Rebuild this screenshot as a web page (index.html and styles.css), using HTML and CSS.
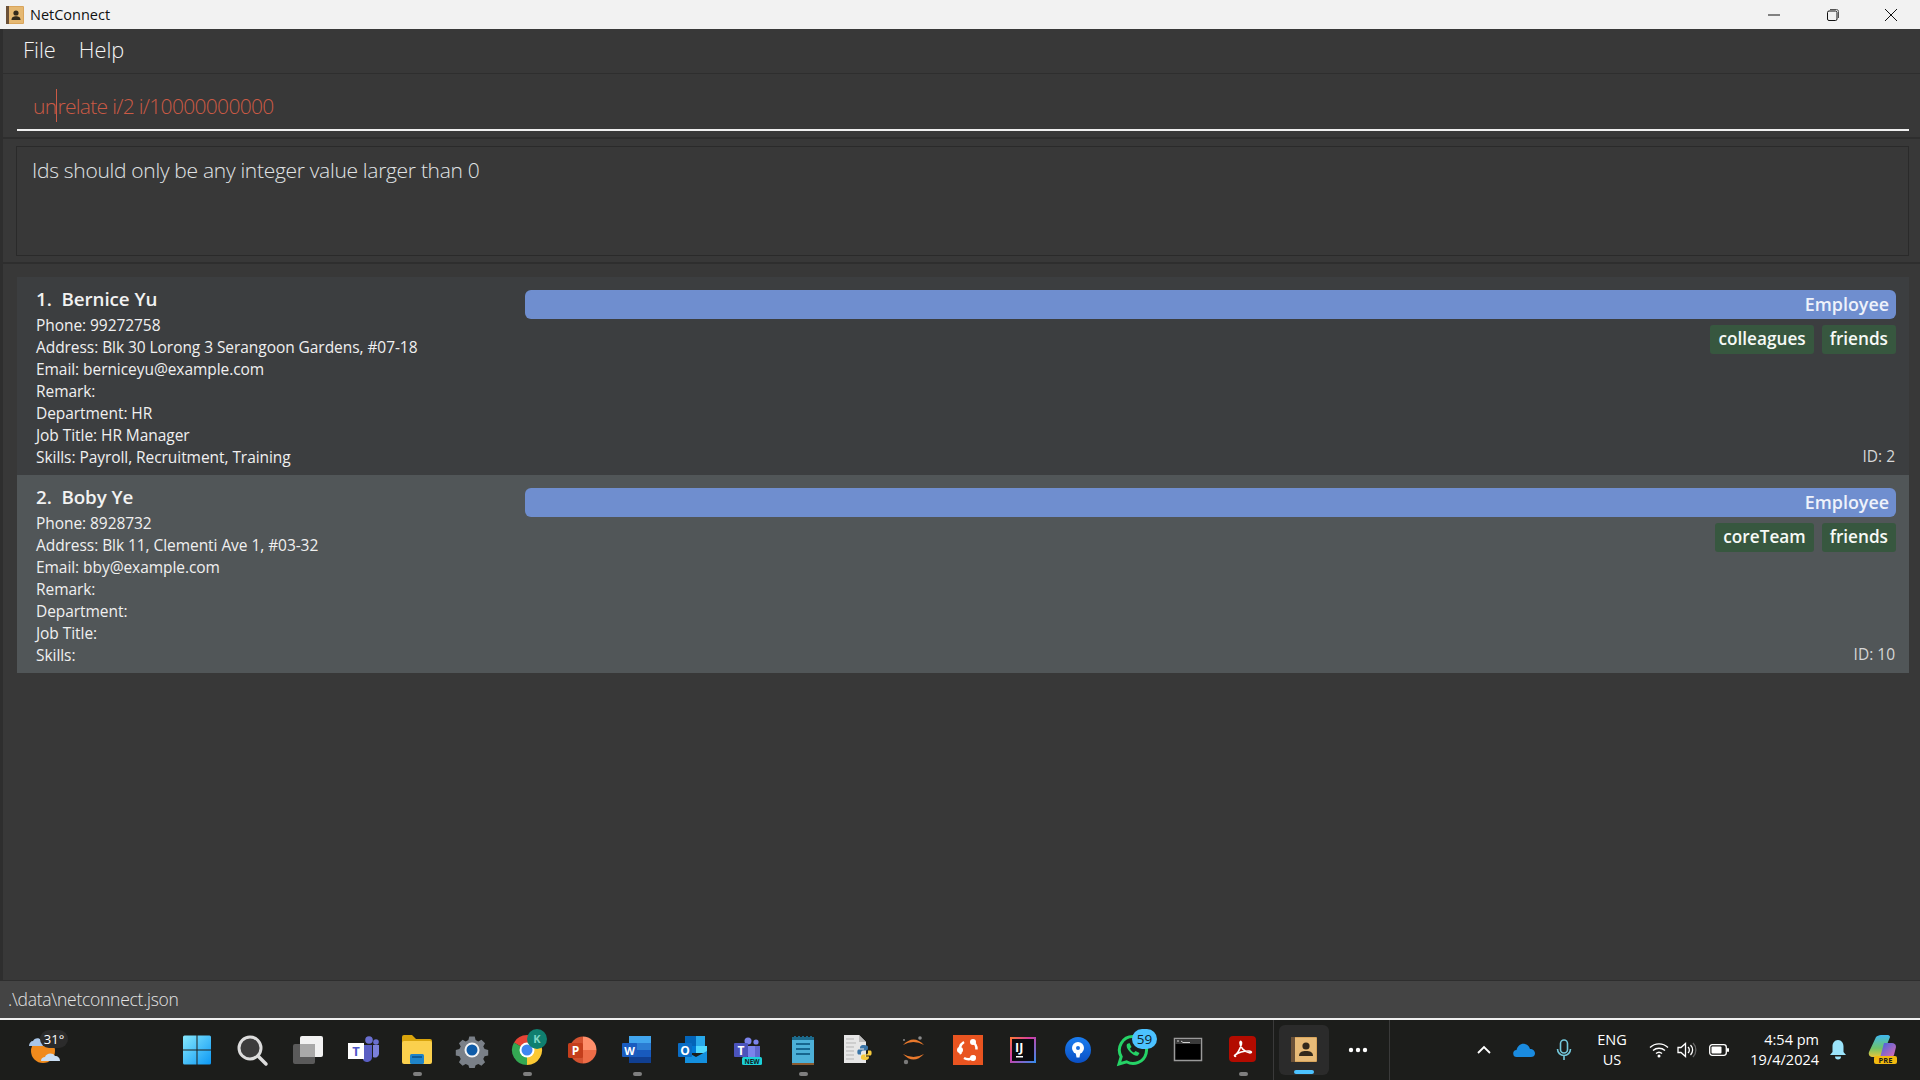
FILE: index.html
```html
<!DOCTYPE html>
<html lang="en">
<head>
<meta charset="utf-8">
<title>NetConnect</title>
<link rel="stylesheet" href="styles.css">
</head>
<body>
<div class="window">
  <header class="titlebar">
    <div class="title-left">
      <svg class="app-icon" width="18" height="18" viewBox="0 0 18 18"><rect width="18" height="18" rx="1" fill="#d9a55c"/><rect width="3" height="18" fill="#6b5138"/><rect x="3" y="1" width="14" height="16" fill="#e5b872"/><circle cx="10" cy="7" r="2.6" fill="#33291c"/><path d="M5.500 14c0-3 2-3.800 4.500-3.800s4.500.8 4.500 3.800z" fill="#33291c"/></svg>
      <span class="title-text">NetConnect</span>
    </div>
    <div class="controls">
      <span class="ctl"><svg width="14" height="14" viewBox="0 0 14 14"><path d="M1 7h12" stroke="#111" stroke-width="1" fill="none"/></svg></span>
      <span class="ctl"><svg width="14" height="14" viewBox="0 0 14 14"><rect x="1.500" y="3" width="9.500" height="9.500" rx="1.500" stroke="#111" fill="none"/><path d="M4 1.500h6.500a2 2 0 0 1 2 2V10" stroke="#555" fill="none"/></svg></span>
      <span class="ctl"><svg width="14" height="14" viewBox="0 0 14 14"><path d="M1 1l12 12M13 1L1 13" stroke="#111" stroke-width="1" fill="none"/></svg></span>
    </div>
  </header>

  <main class="app">
    <nav class="menubar"><span class="menu-item">File</span><span class="menu-item">Help</span></nav>

    <section class="cmd-pane">
      <div class="cmd-input">un<span class="caret"></span>relate i/2 i/10000000000</div>
    </section>

    <section class="result-pane">
      <div class="result-box">Ids should only be any integer value larger than 0</div>
    </section>

    <section class="list-pane">
      <article class="card">
        <div class="card-info">
          <h2 class="name">1.&nbsp; Bernice Yu</h2>
          <p>Phone: 99272758</p>
          <p>Address: Blk 30 Lorong 3 Serangoon Gardens, #07-18</p>
          <p>Email: berniceyu@example.com</p>
          <p>Remark:</p>
          <p>Department: HR</p>
          <p>Job Title: HR Manager</p>
          <p>Skills: Payroll, Recruitment, Training</p>
        </div>
        <div class="card-side">
          <div class="role">Employee</div>
          <div class="tags"><span class="tag">colleagues</span><span class="tag">friends</span></div>
          <div class="card-id">ID: 2</div>
        </div>
      </article>
      <article class="card card-alt">
        <div class="card-info">
          <h2 class="name">2.&nbsp; Boby Ye</h2>
          <p>Phone: 8928732</p>
          <p>Address: Blk 11, Clementi Ave 1, #03-32</p>
          <p>Email: bby@example.com</p>
          <p>Remark:</p>
          <p>Department:</p>
          <p>Job Title:</p>
          <p>Skills:</p>
        </div>
        <div class="card-side">
          <div class="role">Employee</div>
          <div class="tags"><span class="tag">coreTeam</span><span class="tag">friends</span></div>
          <div class="card-id">ID: 10</div>
        </div>
      </article>
    </section>

    <footer class="status">.\data\netconnect.json</footer>
  </main>

  <div class="taskbar">
    <div class="weather">
      <svg width="44" height="40" viewBox="0 0 44 40"><circle cx="18" cy="21" r="12" fill="#f08a1c"/><path d="M4 16c0-3 2-5 4-5 1-3 6-4 8-1 3 0 4 3 4 6z" fill="#a9c6e8"/><path d="M16 31c0-3 2-4 4-4 1-4 8-5 10-1 3 0 5 2 5 5z" fill="#c9ddf2"/><rect x="15" y="0" width="28" height="18" rx="9" fill="#2b2b2b"/><text x="29" y="14" text-anchor="middle" class="svg-t" font-size="13" fill="#fff">31°</text></svg>
    </div>
    <div class="apps">
      <div class="slot"><svg width="40" height="40" viewBox="0 0 40 40"><defs><linearGradient id="w" x1="0" y1="0" x2="1" y2="1"><stop offset="0" stop-color="#86e8fd"/><stop offset="1" stop-color="#0c98f5"/></linearGradient></defs><path d="M6 7a1.500 1.500 0 0 1 1.500-1.500H19.500V19.500H6zM20.500 5.500H32.500A1.500 1.500 0 0 1 34 7V19.500H20.500zM6 20.500H19.500V34.500H7.500A1.500 1.500 0 0 1 6 33zM20.500 20.500H34V33a1.500 1.500 0 0 1-1.500 1.500H20.500z" fill="url(#w)"/></svg></div>
      <div class="slot"><svg width="40" height="40" viewBox="0 0 40 40"><circle cx="18" cy="18" r="11" fill="#3c3c3c" stroke="#dcdcdc" stroke-width="3"/><path d="M26 26l8 8" stroke="#dcdcdc" stroke-width="3.500" stroke-linecap="round"/></svg></div>
      <div class="slot"><svg width="40" height="40" viewBox="0 0 40 40"><rect x="6" y="14" width="22" height="20" rx="2" fill="#5a5a5a"/><rect x="13" y="6" width="23" height="21" rx="2" fill="#f2f2f2"/><rect x="13" y="14" width="15" height="13" fill="#a9a9a9"/></svg></div>
      <div class="slot"><svg width="40" height="40" viewBox="0 0 40 40"><circle cx="27" cy="10" r="3.800" fill="#6a6fd0"/><circle cx="34" cy="12" r="2.800" fill="#6a6fd0"/><path d="M21 15h9v12a5 5 0 0 1-9 3z" fill="#5a5fc4"/><path d="M31 15h6v9a4 4 0 0 1-6 3z" fill="#7b80da"/><rect x="6" y="13" width="16" height="16" fill="#fff"/><text x="14" y="26" text-anchor="middle" class="svg-b" font-size="13" fill="#5059c9">T</text></svg></div>
      <div class="slot running"><svg width="40" height="40" viewBox="0 0 40 40"><path d="M5 7a2 2 0 0 1 2-2h8l4 4h14a2 2 0 0 1 2 2v6H5z" fill="#d9a40c"/><rect x="5" y="11" width="30" height="23" rx="2" fill="#fbd04d"/><rect x="13" y="24" width="14" height="10" rx="1.500" fill="#1f84c9"/><rect x="15" y="26" width="10" height="2" fill="#0f5c97"/></svg></div>
      <div class="slot"><svg width="40" height="40" viewBox="0 0 40 40"><path d="M17 5h6l1 4 3 1.500 3.500-2 4 4-2 3.500 1.500 3 4 1v6l-4 1-1.500 3 2 3.500-4 4-3.500-2-3 1.500-1 3h-6l-1-3-3-1.500-3.500 2-4-4 2-3.500-1.500-3-4-1v-6l4-1 1.500-3-2-3.500 4-4 3.500 2 3-1.500z" fill="#7a8088" transform="translate(2 2) scale(.9)"/><circle cx="20" cy="20" r="7.500" fill="#f4f4f4"/><circle cx="20" cy="20" r="5.500" fill="#0f5ca8"/></svg></div>
      <div class="slot running"><svg width="40" height="40" viewBox="0 0 40 40"><path d="M20 20L7 12.500A15 15 0 0 1 33 12.500z" fill="#e54335"/><path d="M20 20L33 12.500A15 15 0 0 1 20 35z" fill="#fcc934"/><path d="M20 20L20 35A15 15 0 0 1 7 12.500z" fill="#34a853"/><circle cx="20" cy="20" r="7.500" fill="#fff"/><circle cx="20" cy="20" r="5.500" fill="#3f86f0"/><circle cx="30" cy="9" r="10" fill="#0f7f6f"/><text x="30" y="13" text-anchor="middle" class="svg-b" font-size="11" fill="#7fd6c5">K</text></svg></div>
      <div class="slot"><svg width="40" height="40" viewBox="0 0 40 40"><path d="M21 20V6.500A13.500 13.500 0 0 1 34.500 20z" fill="#ff8f6b"/><path d="M21 20H34.500A13.500 13.500 0 0 1 21 33.500z" fill="#ed6c47" /><path d="M21 6.500A13.500 13.500 0 0 0 21 33.500z" fill="#d35230"/><rect x="6" y="13" width="15" height="15" rx="1.500" fill="#c43e1c"/><text x="13.500" y="25" text-anchor="middle" class="svg-b" font-size="12" fill="#fff">P</text></svg></div>
      <div class="slot running"><svg width="40" height="40" viewBox="0 0 40 40"><rect x="12" y="6" width="22" height="7" fill="#41a5ee"/><rect x="12" y="13" width="22" height="7" fill="#2b7cd3"/><rect x="12" y="20" width="22" height="7" fill="#185abd"/><rect x="12" y="27" width="22" height="6" fill="#103f91"/><rect x="5" y="13" width="15" height="14" rx="1" fill="#1a5cbf"/><text x="12.500" y="24.500" text-anchor="middle" class="svg-b" font-size="11" fill="#fff">W</text></svg></div>
      <div class="slot"><svg width="40" height="40" viewBox="0 0 40 40"><rect x="13" y="6" width="20" height="10" fill="#0364b8"/><rect x="24" y="6" width="9" height="10" fill="#28a8ea"/><rect x="24" y="16" width="11" height="7" fill="#50d9ff"/><rect x="13" y="16" width="11" height="7" fill="#0078d4"/><path d="M13 21l11 6 11-6v12H13z" fill="#1490df"/><rect x="6" y="13" width="14" height="14" rx="1" fill="#0a6cc4"/><text x="13" y="24.500" text-anchor="middle" class="svg-b" font-size="12" fill="#fff">O</text></svg></div>
      <div class="slot"><svg width="40" height="40" viewBox="0 0 40 40"><circle cx="21" cy="11" r="3.500" fill="#7b83eb"/><circle cx="29" cy="12" r="2.600" fill="#7b83eb"/><rect x="21" y="16" width="7" height="12" fill="#7b83eb"/><rect x="28" y="16" width="5" height="12" fill="#5f66cf"/><rect x="7" y="13" width="14" height="14" rx="1" fill="#4b53bc"/><text x="14" y="24.500" text-anchor="middle" class="svg-b" font-size="12" fill="#fff">T</text><rect x="15" y="27" width="20" height="8" rx="1.500" fill="#1bd0d8"/><text x="25" y="33.500" text-anchor="middle" class="svg-b" font-size="6.500" fill="#10201f">NEW</text></svg></div>
      <div class="slot running"><svg width="40" height="40" viewBox="0 0 40 40"><rect x="9" y="7" width="22" height="26" fill="#4cb0d8"/><rect x="9" y="7" width="22" height="3" fill="#1c6a8c"/><path d="M12 6v3M16 6v3M20 6v3M24 6v3M28 6v3" stroke="#1c6a8c" stroke-width="2"/><rect x="9" y="33" width="22" height="2" fill="#8a5a30"/><path d="M13 14h14M13 19h14M13 24h14" stroke="#16658e" stroke-width="2"/></svg></div>
      <div class="slot"><svg width="40" height="40" viewBox="0 0 40 40"><path d="M6 5h15l7 7v21H6z" fill="#e6e6e6"/><path d="M21 5v7h7z" fill="#bdbdbd"/><path d="M8 9h8M8 13h10M8 17h8M8 21h8M8 25h8M8 29h8" stroke="#b5b5b5"/><path d="M26 15c-4 0-4 2-4 3.500h4v1h-5.500c-1.500 0-1.500 5 0 5H23v-2c0-1 1-2 2-2h3c1 0 2-1 2-2v-1.500c0-1-1-2-4-2z" fill="#3a75a8"/><path d="M27 30c4 0 4-2 4-3.500h-4v-1h5.500c1.500 0 1.500-5 0-5H30v2c0 1-1 2-2 2h-3c-1 0-2 1-2 2V28c0 1 1 2 4 2z" fill="#f5c93c"/></svg></div>
      <div class="slot"><svg width="40" height="40" viewBox="0 0 40 40"><path d="M10 15Q20.500 4 31 15Q20.500 9 10 15z" fill="#e9792c"/><path d="M10 24Q20.500 35 31 24Q20.500 30 10 24z" fill="#e9792c"/><circle cx="27" cy="8" r="1.800" fill="#8a8a8a"/><circle cx="13" cy="32" r="2.200" fill="#7a7a7a"/><circle cx="11" cy="10" r="1" fill="#8a8a8a"/></svg></div>
      <div class="slot"><svg width="40" height="40" viewBox="0 0 40 40"><rect x="5" y="5" width="30" height="30" fill="#e95420"/><path d="M13 24a8.500 8.500 0 0 1 3-12M24 11.500a8.500 8.500 0 0 1 4.500 8M27 26a8.500 8.500 0 0 1-11 2" stroke="#fff" stroke-width="2.500" fill="none"/><circle cx="12" cy="20" r="3" fill="#fff"/><circle cx="25" cy="12" r="3" fill="#fff"/><circle cx="25" cy="28" r="3" fill="#fff"/></svg></div>
      <div class="slot"><svg width="40" height="40" viewBox="0 0 40 40"><defs><linearGradient id="ij" x1="0" y1="0" x2="1" y2="1"><stop offset="0" stop-color="#ff7a2f"/><stop offset=".4" stop-color="#d43ca4"/><stop offset="1" stop-color="#2f8ff0"/></linearGradient></defs><rect x="7" y="7" width="26" height="26" fill="url(#ij)"/><rect x="9" y="9" width="22" height="22" fill="#0b0b10"/><text x="12" y="22" class="svg-b" font-size="12.500" fill="#fff">IJ</text><rect x="13" y="26" width="7" height="1.500" fill="#fff"/></svg></div>
      <div class="slot"><svg width="40" height="40" viewBox="0 0 40 40"><defs><linearGradient id="st" x1="0" y1="0" x2="0" y2="1"><stop offset="0" stop-color="#1a7df0"/><stop offset="1" stop-color="#0a4fc4"/></linearGradient></defs><circle cx="20" cy="20" r="13" fill="url(#st)"/><circle cx="20" cy="18" r="6" fill="#fff"/><path d="M17.500 22h5l-1 5.500h-3z" fill="#fff"/><circle cx="20" cy="18" r="2" fill="#1a6fe0"/></svg></div>
      <div class="slot"><svg class="over" width="40" height="40" viewBox="0 0 40 40"><path d="M20 6.500a13.500 13.500 0 1 1-6.500 25.300L6 34l2.200-7.300A13.500 13.500 0 0 1 20 6.500z" fill="none" stroke="#25d366" stroke-width="3"/><path d="M14 14c-1 2 0 5 3 8s6 4.500 8 3.500l1.500-2.500-4-2-1.500 1.500c-1.500-.5-3.500-2.500-4-4l1.500-1.500-2-4z" fill="#25d366"/><rect x="19" y="-1" width="25" height="20" rx="10" fill="#4cc2ff"/><text x="31.500" y="14" text-anchor="middle" class="svg-t" font-size="13.500" fill="#10222c">59</text></svg></div>
      <div class="slot"><svg width="40" height="40" viewBox="0 0 40 40"><rect x="6.500" y="8.500" width="27" height="22" fill="#000" stroke="#9a9a9a" stroke-width="1.500"/><rect x="7" y="9" width="26" height="5" fill="#3a3a3a"/><path d="M9 11h2M13 11l2 1.500h7" stroke="#cfcfcf" stroke-width="1" fill="none"/></svg></div>
      <div class="slot running"><svg width="40" height="40" viewBox="0 0 40 40"><rect x="6" y="6" width="27" height="26" rx="4" fill="#b30b00"/><path d="M11 26c3-1.500 6-7 7.500-12 .5-3-1.500-3.500-1.500-1 0 4 4 9 10 10 2 0 2-2-1-2-4 0-10 1-14 4-1 1 0 2 1 1" fill="none" stroke="#fff" stroke-width="1.600"/></svg></div>
    </div>
    <div class="sep sep-a"></div>
    <div class="active">
      <svg width="26" height="26" viewBox="0 0 26 26"><rect width="26" height="25" rx="1" fill="#d9a55c"/><rect width="4" height="25" fill="#6b5138"/><rect x="4" y="1" width="21" height="23" fill="#e8bb78"/><circle cx="15" cy="9" r="3.600" fill="#33291c"/><path d="M8 19c0-4 3-5 7-5s7 1 7 5z" fill="#33291c"/></svg>
    </div>
    <div class="more"><svg width="20" height="6" viewBox="0 0 20 6"><circle cx="3" cy="3" r="2.200" fill="#fff"/><circle cx="10" cy="3" r="2.200" fill="#fff"/><circle cx="17" cy="3" r="2.200" fill="#fff"/></svg></div>
    <div class="sep sep-b"></div>
    <div class="tray">
      <div class="t-slot w40"><svg width="16" height="10" viewBox="0 0 16 10"><path d="M2 8l6-6 6 6" stroke="#fff" stroke-width="1.800" fill="none"/></svg></div>
      <div class="t-slot w40"><svg width="22" height="15" viewBox="0 0 22 15"><path d="M4 14a3.500 3.500 0 0 1-.5-7C4.500 3 8 0 12 1c3 .6 4.500 3 5 5 3 0 5 2 5 4.500S20 14 18 14z" fill="#1a8be0"/></svg></div>
      <div class="t-slot w40"><svg width="16" height="22" viewBox="0 0 16 22"><rect x="4.500" y="1" width="7" height="13" rx="3.500" fill="none" stroke="#74c8dc" stroke-width="1.600"/><path d="M1.500 10a6.500 6.500 0 0 0 13 0M8 16.500V21" fill="none" stroke="#74c8dc" stroke-width="1.600"/></svg></div>
      <div class="t-slot lang"><span>ENG</span><span>US</span></div>
      <div class="t-slot w28 net"><svg width="20" height="16" viewBox="0 0 20 16"><path d="M1 5.500a13 13 0 0 1 18 0M4 8.500a9 9 0 0 1 12 0M7 11.500a4.500 4.500 0 0 1 6 0" fill="none" stroke="#fff" stroke-width="1.400"/><circle cx="10" cy="14" r="1.500" fill="#fff"/></svg></div>
      <div class="t-slot w28"><svg width="20" height="18" viewBox="0 0 20 18"><path d="M1 6.500h3l4.500-4v13l-4.500-4H1z" fill="none" stroke="#fff" stroke-width="1.300"/><path d="M11 6a4 4 0 0 1 0 6M13.500 4a7 7 0 0 1 0 10" fill="none" stroke="#fff" stroke-width="1.300"/><path d="M16 2a10 10 0 0 1 0 14" fill="none" stroke="#666" stroke-width="1.300"/></svg></div>
      <div class="t-slot w36"><svg width="20" height="12" viewBox="0 0 20 12"><rect x=".7" y=".7" width="16.600" height="10.600" rx="2.500" fill="none" stroke="#fff" stroke-width="1.300"/><rect x="2.500" y="2.500" width="10" height="7" rx="1" fill="#fff"/><rect x="18" y="4" width="2" height="4" rx="1" fill="#fff"/></svg></div>
      <div class="clock"><span>4:54 pm</span><span>19/4/2024</span></div>
      <div class="t-slot w38"><svg width="16" height="20" viewBox="0 0 16 20"><path d="M8 0c3.500 0 5.500 3 5.500 6.500V12l2.500 3H0l2.500-3V6.500C2.500 3 4.500 0 8 0z" fill="#9be4fb"/><path d="M5 16.500h6a3 3 0 0 1-6 0z" fill="#9be4fb"/></svg></div>
      <div class="t-slot w52"><svg width="30" height="30" viewBox="0 0 30 30"><defs><linearGradient id="c1" x1="0" y1="0" x2="0" y2="1"><stop offset="0" stop-color="#3fb8f0"/><stop offset=".6" stop-color="#6fc36a"/><stop offset="1" stop-color="#e8c53a"/></linearGradient><linearGradient id="c2" x1="0" y1="0" x2="1" y2="1"><stop offset="0" stop-color="#3a63e0"/><stop offset="1" stop-color="#e86ab0"/></linearGradient></defs><path d="M8 2c1-1 3-2 5-2h7c1 0 2 1 2 2L14 22H5c-3 0-5-2-4-5z" fill="url(#c1)"/><path d="M16 8h8c2 0 4 1 4 4l-2 8c-1 2-2 3-4 3H12z" fill="url(#c2)"/><rect x="6" y="21" width="23" height="8" rx="2" fill="#f2b90f"/><text x="17.500" y="27.700" text-anchor="middle" class="svg-b" font-size="7.500" fill="#1a1a1a">PRE</text></svg></div>
    </div>
  </div>
</div>
</body>
</html>
```
FILE: styles.css
```css
* { box-sizing: border-box; }
html, body { margin: 0; padding: 0; }
body { width: 1920px; height: 1080px; overflow: hidden; font-family: "Open Sans", "Noto Sans", sans-serif; background: #383838; }
.window { display: flex; flex-direction: column; height: 1080px; }

.titlebar { flex: 0 0 29px; background: #f2f2f2; display: flex; justify-content: space-between; align-items: center; color: #111; }
.title-left { display: flex; align-items: center; padding-left: 6px; gap: 6px; }
.title-text { font-size: 14.500px; }
.controls { display: flex; padding-right: 22px; gap: 44.500px; }
.ctl { display: flex; width: 14px; height: 14px; }

.app { flex: 1; min-height: 0; display: flex; flex-direction: column; background: #383838; border-left: 3px solid #2e2e2e; color: #fff; }
.menubar { flex: 0 0 45px; display: flex; align-items: center; padding: 0 0 3px 23px; gap: 23px; border-bottom: 1px solid #2e2e2e; margin-left: -3px; font-size: 21.800px; font-weight: 300; color: #f4f4f4; }

.cmd-pane { flex: 0 0 65px; padding: 0 11px 0 14px; border-bottom: 2px solid #2e2e2e; }
.cmd-input { height: 57px; padding: 15px 0 0 16px; border-bottom: 2px solid #f0f0f0; font-size: 21px; letter-spacing: -.69px; line-height: 30px; font-weight: 300; color: #cb5a45; white-space: nowrap; }
.caret { display: inline-block; width: 0; height: 33px; margin-bottom: -8px; border-left: 1px solid #cb5a45; }

.result-pane { flex: 0 0 125px; padding: 7px 11px 0 13px; border-bottom: 2px solid #2e2e2e; }
.result-box { height: 110px; border: 1px solid #2a2a2a; padding: 8px 15px; font-size: 21px; letter-spacing: -.3px; line-height: 30px; font-weight: 300; color: #e0e4e6; white-space: nowrap; }

.list-pane { flex: 1; min-height: 0; padding: 13px 11px 0 14px; }
.card { height: 198px; display: flex; justify-content: space-between; background: #3c3e40; padding: 10px 13px 0 19px; }
.card-alt { background: #515658; }
.card-info { width: 489px; flex: none; font-size: 15.500px; letter-spacing: -.06px; line-height: 22px; font-weight: 400; color: #f0f0f0; }
.card-info p { margin: 0; white-space: nowrap; }
.name { margin: 0 0 3px; font-size: 18.800px; line-height: 24px; font-weight: 600; color: #f2f2f2; }
.card-side { flex: 1; display: flex; flex-direction: column; align-items: stretch; padding-top: 3px; }
.role { height: 29px; background: #6f8ecf; border-radius: 6px; text-align: right; padding-right: 7px; font-size: 17.900px; line-height: 28px; font-weight: 600; color: #eef2fb; }
.tags { display: flex; justify-content: flex-end; gap: 8px; margin-top: 6px; }
.tag { height: 29px; padding: 0 8px; background: #37573f; border-radius: 3px; font-size: 17.200px; line-height: 28px; font-weight: 600; color: #f6f9f6; }
.card-id { margin-top: 91px; text-align: right; padding-right: 1px; font-size: 15.500px; line-height: 22px; color: #d6d6d6; }

.status { flex: 0 0 40px; background: #444; border-top: 1px solid #2e2e2e; border-bottom: 2px solid #f0f0f0; margin-left: -3px; padding-left: 8px; font-size: 17.500px; letter-spacing: -.27px; line-height: 37px; font-weight: 300; color: #e4e4e4; }

.taskbar { flex: 0 0 60px; display: flex; align-items: stretch; padding-right: 11px; background: #1c1d1b; color: #fff; }
.weather { flex: 0 0 169.500px; padding: 10px 0 0 25px; }
.apps { display: flex; }
.slot { position: relative; flex: 0 0 55.050px; display: flex; align-items: center; justify-content: center; }
.slot svg { overflow: visible; }
.slot.running::after { content: ""; position: absolute; left: 50%; bottom: 4px; width: 9px; height: 4px; margin-left: -4px; border-radius: 2px; background: #7f7f7f; }
.svg-t { font-family: "Open Sans", "Noto Sans", sans-serif; }
.svg-b { font-family: "Open Sans", "Noto Sans", sans-serif; font-weight: 700; }
.sep { flex: none; width: 1px; background: #3a3a3a; }
.sep-a { margin-left: 3px; }
.sep-b { margin-left: 2px; }
.active { position: relative; flex: 0 0 50px; margin: 5px 0 5px 5px; display: flex; align-items: center; justify-content: center; background: #2b2b2b; border-radius: 6px; }
.active::after { content: ""; position: absolute; left: 15px; bottom: 1px; width: 20px; height: 4px; border-radius: 2px; background: #4cc2ff; }
.more { flex: 0 0 58px; display: flex; align-items: center; justify-content: center; }
.tray { margin-left: auto; display: flex; align-items: center; }
.t-slot { display: flex; align-items: center; justify-content: center; height: 60px; }
.w40 { width: 40px; }
.w28 { width: 28px; }
.w36 { width: 36px; }
.w38 { width: 38px; }
.w52 { width: 52px; }
.net { margin-left: 5px; }
.lang { width: 56px; flex-direction: column; font-size: 14.500px; line-height: 20px; }
.clock { width: 82px; display: flex; flex-direction: column; align-items: flex-end; font-size: 14.500px; line-height: 20px; white-space: nowrap; }
```
